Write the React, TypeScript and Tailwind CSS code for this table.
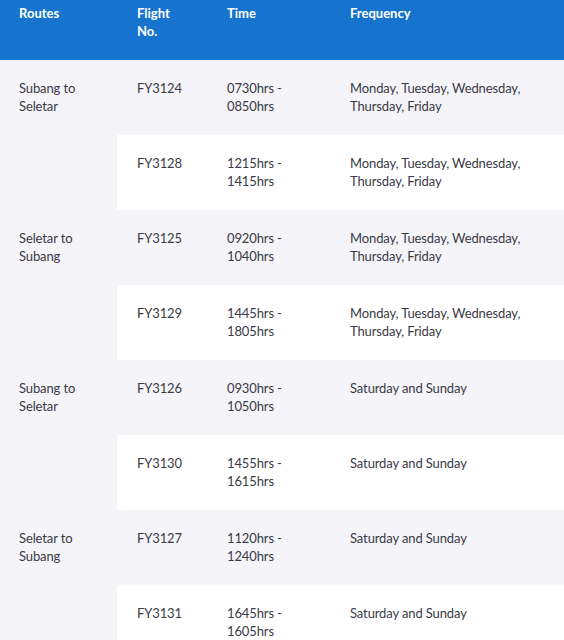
const groups = [
  {
    route: "Subang to Seletar",
    flights: [
      { no: "FY3124", from: "0730hrs -", to: "0850hrs", freq: "Monday, Tuesday, Wednesday, Thursday, Friday" },
      { no: "FY3128", from: "1215hrs -", to: "1415hrs", freq: "Monday, Tuesday, Wednesday, Thursday, Friday" },
    ],
  },
  {
    route: "Seletar to Subang",
    flights: [
      { no: "FY3125", from: "0920hrs -", to: "1040hrs", freq: "Monday, Tuesday, Wednesday, Thursday, Friday" },
      { no: "FY3129", from: "1445hrs -", to: "1805hrs", freq: "Monday, Tuesday, Wednesday, Thursday, Friday" },
    ],
  },
  {
    route: "Subang to Seletar",
    flights: [
      { no: "FY3126", from: "0930hrs -", to: "1050hrs", freq: "Saturday and Sunday" },
      { no: "FY3130", from: "1455hrs -", to: "1615hrs", freq: "Saturday and Sunday" },
    ],
  },
  {
    route: "Seletar to Subang",
    flights: [
      { no: "FY3127", from: "1120hrs -", to: "1240hrs", freq: "Saturday and Sunday" },
      { no: "FY3131", from: "1645hrs -", to: "1605hrs", freq: "Saturday and Sunday" },
    ],
  },
];

export default function App() {
  return (
    <div className="w-[564px] bg-[#f4f4f9] font-['Lato',_'Liberation_Sans',_sans-serif] text-[13px] leading-[18px] text-[#3a3a45]">
      <table className="w-full border-collapse table-fixed">
        <colgroup>
          <col className="w-[117px]" />
          <col className="w-[90px]" />
          <col className="w-[123px]" />
          <col />
        </colgroup>
        <thead>
          <tr className="bg-[#1674ce] text-white font-bold h-[60px]">
            <th className="text-left align-top font-bold pl-[19px] pt-[4px]">Routes</th>
            <th className="text-left align-top font-bold pl-[20px] pt-[4px]">
              Flight
              <br />
              No.
            </th>
            <th className="text-left align-top font-bold pl-[20px] pt-[4px]">Time</th>
            <th className="text-left align-top font-bold pl-[20px] pt-[4px]">Frequency</th>
          </tr>
        </thead>
        <tbody className="tracking-[-0.12px]">
          {groups.map((g, gi) =>
            g.flights.map((f, fi) => (
              <tr key={`${gi}-${fi}`} className={fi === 0 ? "h-[75px] bg-[#f4f4f9]" : "h-[75px] bg-white"}>
                {fi === 0 && (
                  <td rowSpan={2} className="align-top bg-[#f4f4f9] pl-[19px] pr-[10px] pt-[19px]">
                    {g.route.replace(" to ", " to\n").split("\n").map((l, i) => (
                      <div key={i}>{l}</div>
                    ))}
                  </td>
                )}
                <td className="align-top pl-[20px] pt-[19px]">{f.no}</td>
                <td className="align-top pl-[20px] pt-[19px]">
                  <div>{f.from}</div>
                  <div>{f.to}</div>
                </td>
                <td className="align-top pl-[20px] pr-[24px] pt-[19px]">{f.freq}</td>
              </tr>
            ))
          )}
        </tbody>
      </table>
    </div>
  );
}
